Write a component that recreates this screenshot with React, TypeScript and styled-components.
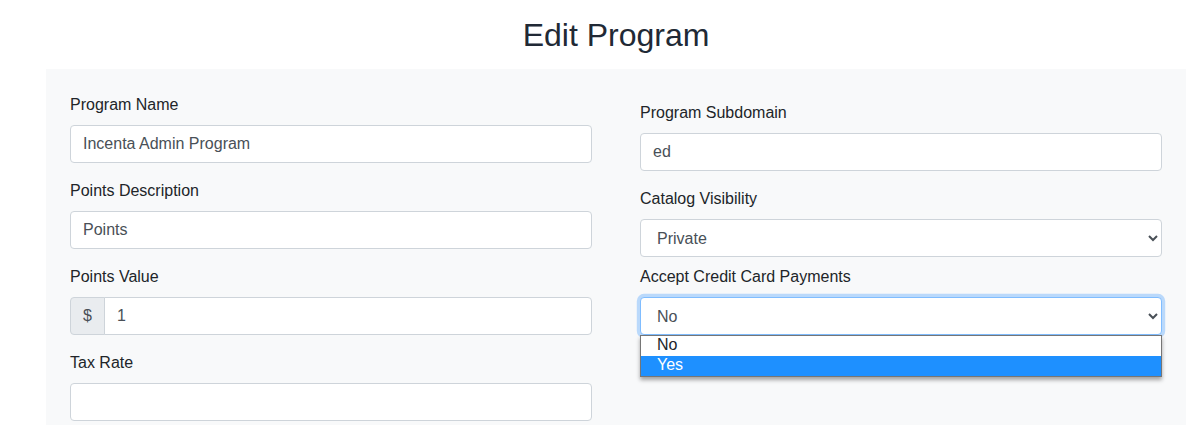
import React from "react";
import styled, { createGlobalStyle, css } from "styled-components";

const GlobalStyle = createGlobalStyle`
  * { box-sizing: border-box; }
  body {
    margin: 0;
    background: #ffffff;
    font-family: "Liberation Sans", Arial, sans-serif;
    font-size: 16px;
    line-height: 1.5;
    color: #212529;
  }
`;

const Page = styled.div`
  width: 1140px;
  margin-left: 46px;
`;

const Title = styled.h2`
  margin: 16px 0 15px;
  font-size: 32px;
  font-weight: 400;
  line-height: 1.2;
  text-align: center;
  color: #212935;
`;

const Panel = styled.div`
  background: #f8f9fa;
  padding: 24px 24px 16px;
  display: grid;
  grid-template-columns: 522px 522px;
  column-gap: 48px;
`;

const Column = styled.div<{ $offset?: number }>`
  display: flex;
  flex-direction: column;
  padding-top: ${(p) => p.$offset ?? 0}px;
`;

const Group = styled.div<{ $mb?: number }>`
  margin-bottom: ${(p) => p.$mb ?? 16}px;
  position: relative;
`;

const Label = styled.label`
  display: block;
  margin-bottom: 8px;
  font-size: 16px;
  line-height: 24px;
  color: #212529;
`;

const controlBase = css`
  display: block;
  width: 100%;
  height: 38px;
  padding: 6px 12px;
  font-family: "Liberation Sans", Arial, sans-serif;
  font-size: 16px;
  line-height: 24px;
  color: #495057;
  background: #ffffff;
  border: 1px solid #ced4da;
  border-radius: 4px;
  outline: none;
`;

const Input = styled.input`
  ${controlBase}
`;

const Select = styled.select<{ $focused?: boolean }>`
  ${controlBase}
  ${(p) =>
    p.$focused &&
    css`
      border-color: #80bdff;
      box-shadow: 0 0 0 3.2px rgba(0, 123, 255, 0.25);
    `}
`;

const SelectWrap = styled.div`
  position: relative;
`;

const InputGroup = styled.div`
  display: flex;
  width: 100%;
`;

const Addon = styled.span`
  display: flex;
  align-items: center;
  height: 38px;
  padding: 6px 12px;
  font-size: 16px;
  line-height: 24px;
  color: #495057;
  background: #e9ecef;
  border: 1px solid #ced4da;
  border-radius: 4px 0 0 4px;
`;

const GroupInput = styled.input`
  ${controlBase}
  flex: 1;
  margin-left: -1px;
  border-radius: 0 4px 4px 0;
`;

const ListBox = styled.ul`
  position: absolute;
  left: 0;
  right: 0;
  top: 100%;
  margin: 0;
  padding: 0;
  list-style: none;
  background: #ffffff;
  border: 1px solid #767676;
  box-shadow: 0 3px 4px rgba(0, 0, 0, 0.35);
  z-index: 10;
`;

const Option = styled.li<{ $active?: boolean }>`
  height: 20px;
  padding-left: 16px;
  font-size: 16px;
  line-height: 17px;
  color: ${(p) => (p.$active ? "#ffffff" : "#212529")};
  background: ${(p) => (p.$active ? "#1e90ff" : "#ffffff")};
`;

export default function App() {
  return (
    <>
      <GlobalStyle />
      <Page>
        <Title>Edit Program</Title>
        <Panel>
          <Column>
            <Group>
              <Label>Program Name</Label>
              <Input defaultValue="Incenta Admin Program" />
            </Group>
            <Group>
              <Label>Points Description</Label>
              <Input defaultValue="Points" />
            </Group>
            <Group>
              <Label>Points Value</Label>
              <InputGroup>
                <Addon>$</Addon>
                <GroupInput defaultValue="1" />
              </InputGroup>
            </Group>
            <Group>
              <Label>Tax Rate</Label>
              <Input defaultValue="" />
            </Group>
          </Column>
          <Column $offset={8}>
            <Group>
              <Label>Program Subdomain</Label>
              <Input defaultValue="ed" />
            </Group>
            <Group $mb={8}>
              <Label>Catalog Visibility</Label>
              <Select defaultValue="Private">
                <option>Private</option>
                <option>Public</option>
              </Select>
            </Group>
            <Group>
              <Label>Accept Credit Card Payments</Label>
              <SelectWrap>
                <Select $focused defaultValue="No">
                  <option>No</option>
                  <option>Yes</option>
                </Select>
                <ListBox>
                  <Option>No</Option>
                  <Option $active>Yes</Option>
                </ListBox>
              </SelectWrap>
            </Group>
          </Column>
        </Panel>
      </Page>
    </>
  );
}
